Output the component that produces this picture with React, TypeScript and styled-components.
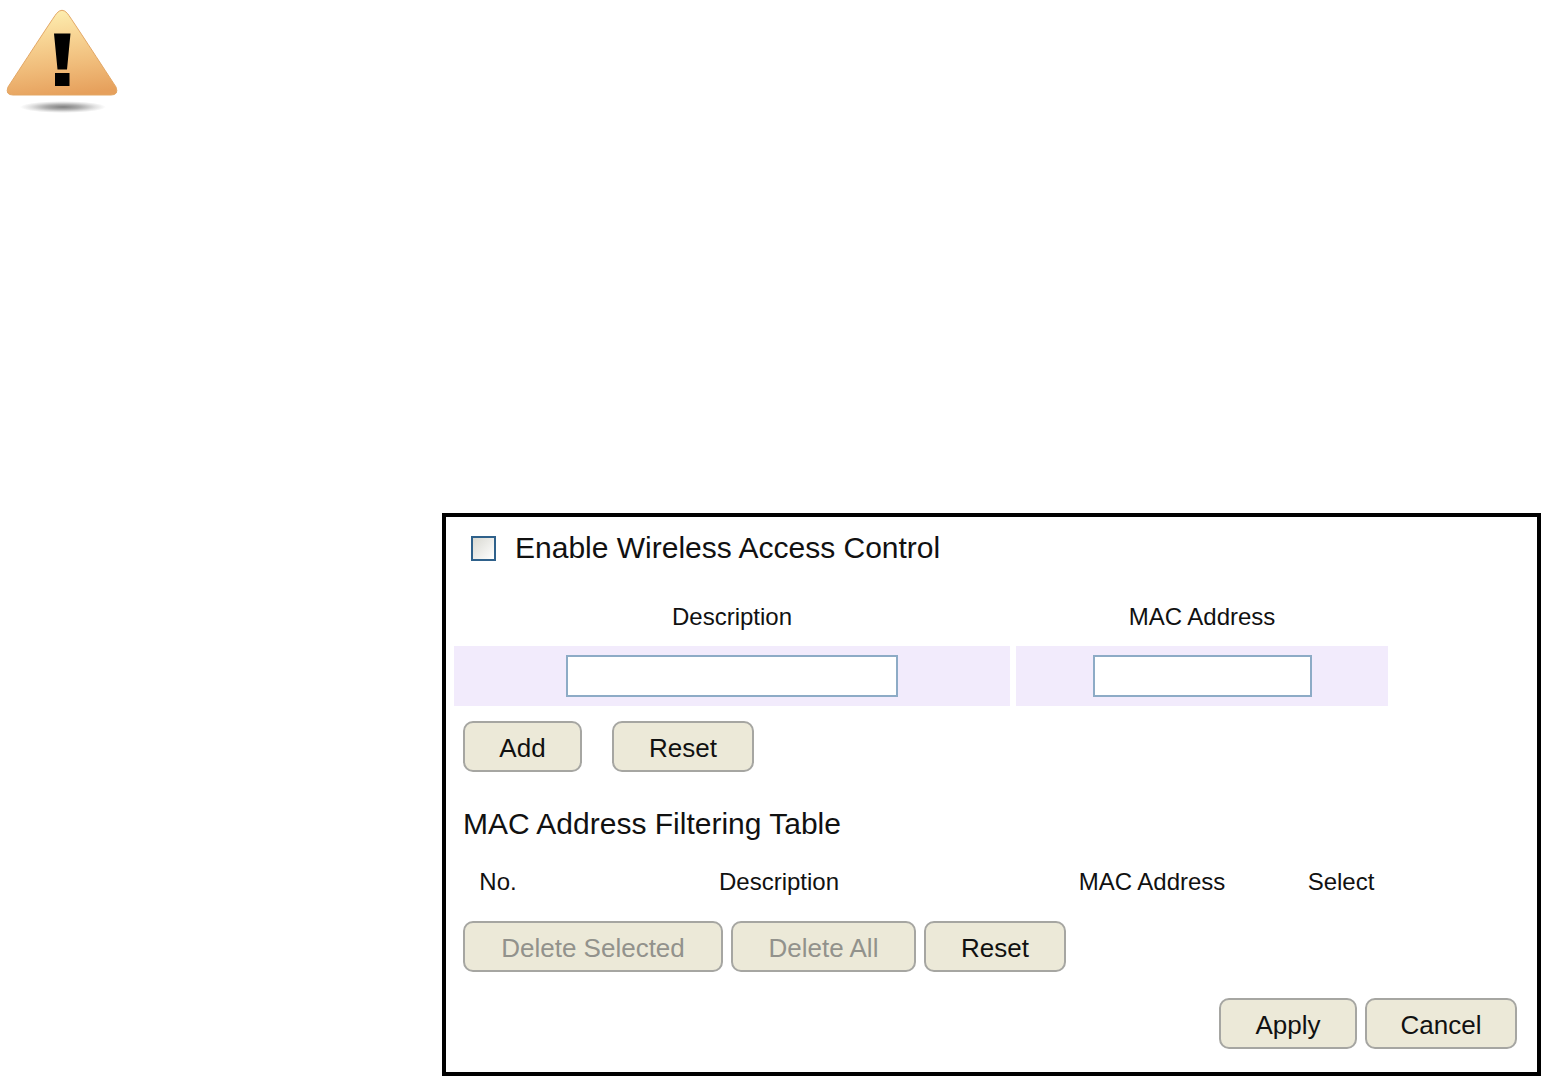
import React, { useState } from 'react';
import styled, { createGlobalStyle } from 'styled-components';

const GlobalStyle = createGlobalStyle`
  *, *::before, *::after { box-sizing: border-box; }
  body {
    margin: 0;
    background: #fff;
    color: #111;
    font-family: "Liberation Sans", Arial, sans-serif;
  }
`;

const Page = styled.main`
  display: flex;
  flex-direction: column;
  gap: 395px;
  padding: 0 11px 10px 0;
`;

const Notice = styled.header`
  height: 118px;
`;

const Panel = styled.form`
  display: flex;
  flex-direction: column;
  margin: 0 0 0 442px;
  padding: 14px 20px 23px 2px;
  border: 4px solid #000;
`;

const EnableRow = styled.label`
  display: flex;
  align-items: center;
  gap: 19px;
  margin-left: 23px;
  font-size: 30px;
  line-height: 34px;
`;

const Checkbox = styled.input`
  appearance: none;
  flex: none;
  width: 25px;
  height: 25px;
  margin: 0;
  border: 2px solid #2f618b;
  background: linear-gradient(135deg, #d9d9d2, #fff);

  &:checked {
    background: #21a121;
    box-shadow: inset 0 0 0 4px #fff;
  }
`;

const SectionTitle = styled.h2`
  margin: 35px 0 0 15px;
  font-size: 30px;
  font-weight: 400;
  line-height: 34px;
`;

const DataTable = styled.table<{ $top: number }>`
  width: calc(100% - 123px);
  margin-top: ${(p) => p.$top}px;
  table-layout: fixed;
  border-spacing: 6px 0;
`;

const Column = styled.col<{ $width?: number }>`
  width: ${(p) => (p.$width ? `${p.$width}px` : 'auto')};
`;

const HeadCell = styled.th`
  height: 58px;
  padding: 0;
  font-size: 24px;
  font-weight: 400;
  text-align: center;
  white-space: nowrap;
`;

const FieldCell = styled.td`
  height: 60px;
  padding: 0;
  background: #f2ebfc;
  text-align: center;
`;

const TextField = styled.input<{ $width: number }>`
  display: block;
  width: ${(p) => p.$width}px;
  max-width: 100%;
  height: 42px;
  margin: 0 auto;
  padding: 0 8px;
  border: 2px solid #8dabc6;
  background: #fff;
  font: 24px "Liberation Sans", Arial, sans-serif;
`;

const ButtonRow = styled.div<{ $top: number; $gap: number; $end?: boolean }>`
  display: flex;
  justify-content: ${(p) => (p.$end ? 'flex-end' : 'flex-start')};
  gap: ${(p) => p.$gap}px;
  margin-top: ${(p) => p.$top}px;
  padding-left: 15px;
`;

const Button = styled.button<{ $width: number }>`
  width: ${(p) => p.$width}px;
  height: 51px;
  padding: 4px 0 0;
  border: 2px solid #a6a6a2;
  border-radius: 10px;
  background: #ece9d8;
  color: #111;
  font: 26px "Liberation Sans", Arial, sans-serif;
  white-space: nowrap;

  &:disabled {
    color: #92928c;
  }
`;

function WarningIcon() {
  return (
    <svg width="124" height="118" viewBox="0 0 124 118" role="img" aria-label="Warning">
      <defs>
        <linearGradient id="face" x1="0.42" y1="0" x2="0.58" y2="1">
          <stop offset="0" stopColor="#fdeeb0" />
          <stop offset="0.3" stopColor="#f8d696" />
          <stop offset="0.65" stopColor="#f0bc7a" />
          <stop offset="1" stopColor="#e6a05c" />
        </linearGradient>
        <radialGradient id="shade">
          <stop offset="0" stopColor="#808080" />
          <stop offset="0.4" stopColor="#ababab" />
          <stop offset="0.75" stopColor="#e2e2e2" />
          <stop offset="1" stopColor="#fff" />
        </radialGradient>
      </defs>
      <ellipse cx="63" cy="107" rx="43" ry="6" fill="url(#shade)" />
      <path
        d="M56.5 13.5 Q62 7 67.5 13.5 Q71 18 116 87 Q119 95 111 95 H13 Q5 95 8 87 Q53 18 56.5 13.5Z"
        fill="url(#face)"
        stroke="#e3a765"
        strokeWidth="1"
      />
      <path d="M54 33.5 H70.500 L67 69.5 H57.5Z M55 73 H69.5 V86 H55Z" fill="#000" />
    </svg>
  );
}

export default function App() {
  const [enabled, setEnabled] = useState(false);

  return (
    <>
      <GlobalStyle />
      <Page>
        <Notice>
          <WarningIcon />
        </Notice>
        <Panel onSubmit={(e) => e.preventDefault()}>
          <EnableRow>
            <Checkbox
              type="checkbox"
              checked={enabled}
              onChange={(e) => setEnabled(e.target.checked)}
            />
            Enable Wireless Access Control
          </EnableRow>

          <DataTable $top={23}>
            <colgroup>
              <Column />
              <Column $width={372} />
            </colgroup>
            <thead>
              <tr>
                <HeadCell scope="col" id="new-description">Description</HeadCell>
                <HeadCell scope="col" id="new-mac">MAC Address</HeadCell>
              </tr>
            </thead>
            <tbody>
              <tr>
                <FieldCell>
                  <TextField type="text" $width={332} aria-labelledby="new-description" />
                </FieldCell>
                <FieldCell>
                  <TextField type="text" $width={219} aria-labelledby="new-mac" />
                </FieldCell>
              </tr>
            </tbody>
          </DataTable>
          <ButtonRow $top={15} $gap={30}>
            <Button type="button" $width={119}>Add</Button>
            <Button type="reset" $width={142}>Reset</Button>
          </ButtonRow>

          <SectionTitle>MAC Address Filtering Table</SectionTitle>
          <DataTable $top={12}>
            <colgroup>
              <Column $width={88} />
              <Column />
              <Column $width={272} />
              <Column $width={94} />
            </colgroup>
            <thead>
              <tr>
                <HeadCell scope="col">No.</HeadCell>
                <HeadCell scope="col">Description</HeadCell>
                <HeadCell scope="col">MAC Address</HeadCell>
                <HeadCell scope="col">Select</HeadCell>
              </tr>
            </thead>
          </DataTable>
          <ButtonRow $top={10} $gap={8}>
            <Button type="button" $width={260} disabled>Delete Selected</Button>
            <Button type="button" $width={185} disabled>Delete All</Button>
            <Button type="reset" $width={142}>Reset</Button>
          </ButtonRow>

          <ButtonRow $top={26} $gap={8} $end>
            <Button type="submit" $width={138}>Apply</Button>
            <Button type="button" $width={152}>Cancel</Button>
          </ButtonRow>
        </Panel>
      </Page>
    </>
  );
}
